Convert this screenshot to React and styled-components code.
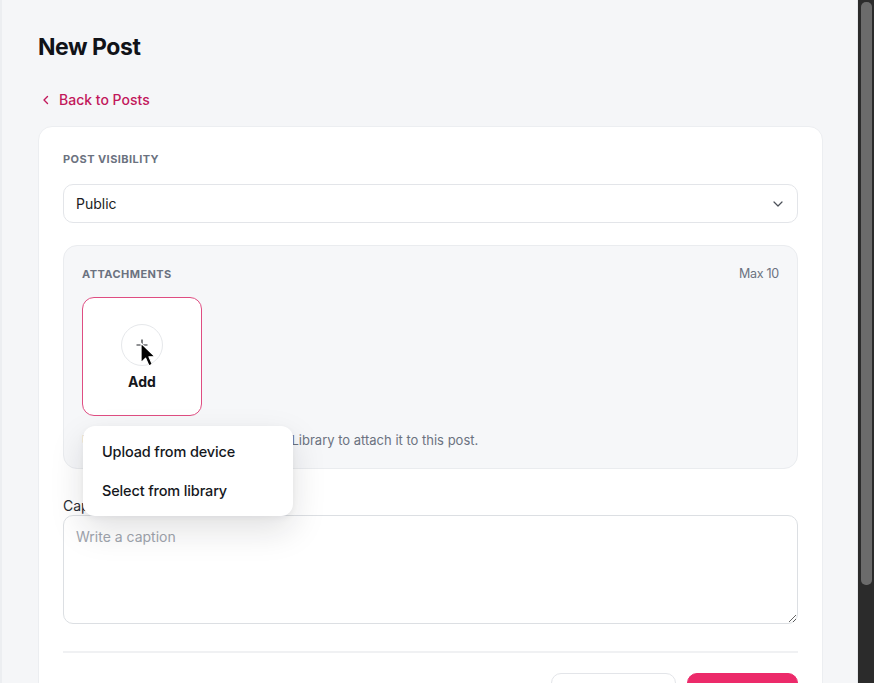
import React, { useState } from "react";
import styled, { createGlobalStyle } from "styled-components";

const GlobalStyle = createGlobalStyle`
  html, body, #root {
    margin: 0;
    height: 100%;
  }
  body {
    font-family: Inter, "Noto Sans", sans-serif;
    color: #111318;
    background: #2b2b2b;
  }
  * { box-sizing: border-box; }
`;

const Frame = styled.div`
  display: flex;
  height: 100vh;
`;

const Shell = styled.div`
  flex: 1;
  overflow: hidden;
  background: #f5f6f8;
  border-left: 2px solid #eceef1;
  border-right: 1px solid #e6e8eb;
`;

const ScrollTrack = styled.div`
  width: 16px;
  flex-shrink: 0;
  background: #2b2b2b;
  padding: 2px 2px 0 3px;
`;

const ScrollThumb = styled.div`
  height: 583px;
  background: #6b6b6b;
  border-radius: 5px;
`;

const Page = styled.main`
  padding: 32px 34px 48px 36px;
`;

const Title = styled.h1`
  margin: 0;
  font-size: 23px;
  font-weight: 700;
  letter-spacing: -0.02em;
  line-height: 30px;
`;

const BackLink = styled.a`
  display: inline-flex;
  align-items: center;
  gap: 9px;
  margin: 29px 0 18px 4px;
  color: #c2185b;
  font-size: 14px;
  font-weight: 500;
  text-decoration: none;
`;

const Card = styled.section`
  background: #fff;
  border: 1px solid #eceef1;
  border-radius: 14px;
  padding: 25px 24px 24px 24px;
  display: flex;
  flex-direction: column;
`;

const Label = styled.div`
  font-size: 11px;
  font-weight: 700;
  letter-spacing: 0.04em;
  color: #6b7280;
  text-transform: uppercase;
`;

const Select = styled.div`
  margin-top: 18px;
  height: 39px;
  border: 1px solid #e3e5e9;
  border-radius: 10px;
  display: flex;
  align-items: center;
  justify-content: space-between;
  padding: 0 14px 0 12px;
  font-size: 14px;
  color: #1b1d22;
`;

const AttachBox = styled.div`
  margin-top: 22px;
  background: #f6f7f9;
  border: 1px solid #eaecef;
  border-radius: 14px;
  padding: 20px 18px 20px 18px;
`;

const AttachHead = styled.div`
  display: flex;
  justify-content: space-between;
  align-items: center;
`;

const Max = styled.span`
  font-size: 12.5px;
  color: #6b7280;
  letter-spacing: -0.02em;
`;

const AddWrap = styled.div`
  position: relative;
  margin-top: 16px;
  width: 120px;
`;

const AddTile = styled.button`
  position: relative;
  width: 120px;
  height: 119px;
  border: 1px solid #df4d82;
  border-radius: 12px;
  background: #fff;
  display: flex;
  flex-direction: column;
  align-items: center;
  justify-content: center;
  gap: 7px;
  padding: 0;
  font-family: inherit;
  font-size: 14px;
  font-weight: 700;
  color: #15171c;
  cursor: pointer;
`;

const PlusCircle = styled.span`
  width: 42px;
  height: 42px;
  border-radius: 50%;
  border: 1px solid #e6e8eb;
  display: flex;
  align-items: center;
  justify-content: center;
`;

const Cursor = styled.svg`
  position: absolute;
  left: 58px;
  top: 45px;
`;

const Menu = styled.div`
  position: absolute;
  top: 129px;
  left: 1px;
  width: 210px;
  background: #fff;
  border-radius: 12px;
  box-shadow: 0 14px 34px rgba(20, 24, 33, 0.13), 0 2px 6px rgba(20, 24, 33, 0.05);
  padding: 6px 0;
  z-index: 5;
`;

const MenuItem = styled.div`
  padding: 0 19px;
  height: 39px;
  display: flex;
  align-items: center;
  font-size: 14.5px;
  font-weight: 500;
  color: #15171c;
  letter-spacing: -0.01em;
`;

const Hint = styled.p`
  margin: 16px 0 0;
  font-size: 13px;
  color: #6b7280;
`;

const FieldLabel = styled.label`
  margin-top: 28px;
  font-size: 14px;
  color: #2a2d33;
`;

const Caption = styled.textarea`
  margin-top: 1px;
  height: 109px;
  border: 1px solid #dcdfe3;
  border-radius: 10px;
  padding: 12px 12px;
  font-family: inherit;
  font-size: 14px;
  color: #1b1d22;
  &::placeholder {
    color: #a0a5ad;
  }
`;

const Divider = styled.hr`
  margin: 27px 0 20px;
  border: none;
  border-top: 2px solid #f0f1f3;
`;

const Footer = styled.div`
  display: flex;
  align-items: center;
  justify-content: space-between;
`;

const Draft = styled.span`
  font-size: 13px;
  color: #6b7280;
  padding-left: 6px;
  padding-top: 14px;
`;

const Actions = styled.div`
  display: flex;
  gap: 11px;
`;

const Btn = styled.button`
  height: 40px;
  width: ${(p) => (p.$primary ? "111px" : "125px")};
  border-radius: 10px;
  border: 1px solid ${(p) => (p.$primary ? "#ec2a6a" : "#e3e5e9")};
  background: ${(p) => (p.$primary ? "#ec2a6a" : "#fff")};
  color: ${(p) => (p.$primary ? "#fff" : "#1b1d22")};
  font-family: inherit;
  font-size: 14px;
  font-weight: 600;
`;

export default function App() {
  const [open] = useState(true);

  return (
    <>
      <GlobalStyle />
      <Frame>
        <Shell>
          <Page>
            <Title>New Post</Title>
            <BackLink href="#">
              <svg width="8" height="10" viewBox="0 0 8 10" fill="none">
                <path d="M5.5 1.5 2 5l3.5 3.5" stroke="#c2185b" strokeWidth="1.4" strokeLinecap="round" strokeLinejoin="round" />
              </svg>
              Back to Posts
            </BackLink>

            <Card>
              <Label>Post visibility</Label>
              <Select>
                Public
                <svg width="10" height="6" viewBox="0 0 10 6" fill="none">
                  <path d="M1 1l4 4 4-4" stroke="#4b5058" strokeWidth="1.2" strokeLinecap="round" strokeLinejoin="round" />
                </svg>
              </Select>

              <AttachBox>
                <AttachHead>
                  <Label>Attachments</Label>
                  <Max>Max 10</Max>
                </AttachHead>
                <AddWrap>
                  <AddTile>
                    <PlusCircle>
                      <svg width="12" height="12" viewBox="0 0 12 12" fill="none">
                        <path d="M6 0.5v11M0.5 6h11" stroke="#22252a" strokeWidth="1.2" />
                      </svg>
                    </PlusCircle>
                    Add
                  </AddTile>
                  <Cursor width="15" height="25" viewBox="0 0 14 23">
                    <path d="M1 1v18l4.2-4.2 3.2 7.2 3-1.3-3.1-7h5.8z" fill="#000" stroke="#fff" strokeWidth="1" strokeLinejoin="round" />
                  </Cursor>
                  {open && (
                    <Menu>
                      <MenuItem>Upload from device</MenuItem>
                      <MenuItem>Select from library</MenuItem>
                    </Menu>
                  )}
                </AddWrap>
                <Hint>Upload a file or choose from your Library to attach it to this post.</Hint>
              </AttachBox>

              <FieldLabel>Caption</FieldLabel>
              <Caption placeholder="Write a caption" />

              <Divider />
              <Footer>
                <Draft>✎ Save as draft</Draft>
                <Actions>
                  <Btn>Cancel</Btn>
                  <Btn $primary>Publish</Btn>
                </Actions>
              </Footer>
            </Card>
          </Page>
        </Shell>
        <ScrollTrack>
          <ScrollThumb />
        </ScrollTrack>
      </Frame>
    </>
  );
}
